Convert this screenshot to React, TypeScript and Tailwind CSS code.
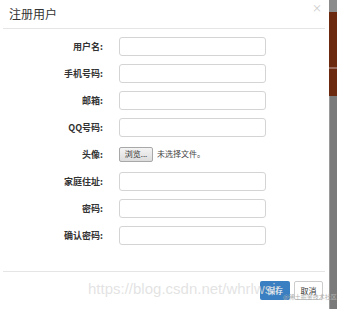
import React from "react";

const rows: { label: string; type: "input" | "file" }[] = [
  { label: "用户名:", type: "input" },
  { label: "手机号码:", type: "input" },
  { label: "邮箱:", type: "input" },
  { label: "QQ号码:", type: "input" },
  { label: "头像:", type: "file" },
  { label: "家庭住址:", type: "input" },
  { label: "密码:", type: "input" },
  { label: "确认密码:", type: "input" },
];

export default function App() {
  return (
    <div
      className="relative flex h-[309px] w-[337px] overflow-hidden bg-white"
      style={{ fontFamily: '"Noto Sans CJK SC", "Noto Sans", sans-serif' }}
    >
      <div className="flex w-[329px] flex-col pl-[3px] pr-[4px]">
        <div className="relative flex h-[29px] items-center border-b border-[#e5e5e5] pl-[6px]">
          <span className="text-[12px] leading-none text-[#333]">注册用户</span>
          <span className="absolute right-[3px] top-[3px] text-[10px] leading-none text-[#c8c8c8]">×</span>
        </div>
        <div className="flex flex-col gap-[9px] pt-[8px] pb-[27px]">
          {rows.map((r) => (
            <div key={r.label} className="flex h-[18px] items-center">
              <div className="w-[100px] text-right text-[9px] font-bold leading-none text-[#333]">
                {r.label}
              </div>
              <div className="ml-[16px]">
                {r.type === "input" ? (
                  <div className="h-[19px] w-[147px] rounded-[3px] border border-[#d4d4d4] bg-white" />
                ) : (
                  <div className="flex items-center">
                    <div className="flex h-[15px] w-[34px] items-center justify-center rounded-[2px] border border-[#a8a8a8] bg-gradient-to-b from-[#f4f4f4] to-[#dcdcdc] text-[8px] leading-none text-[#333]">
                      浏览...
                    </div>
                    <span className="ml-[4px] text-[8px] leading-none text-[#444]">未选择文件。</span>
                  </div>
                )}
              </div>
            </div>
          ))}
        </div>
        <div className="flex justify-end gap-[4px] border-t border-[#e5e5e5] pt-[9px] pr-[2px]">
          <div className="flex h-[19px] w-[30px] items-center justify-center rounded-[2px] bg-[#3a7fc1] text-[8px] leading-none text-white">
            保存
          </div>
          <div className="flex h-[19px] w-[29px] items-center justify-center rounded-[2px] border border-[#ccc] bg-white text-[8px] leading-none text-[#333]">
            取消
          </div>
        </div>
      </div>
      <div className="flex w-[8px] flex-col">
        <div className="h-[12px] bg-[#8c8c8c]" />
        <div className="h-[55px] bg-[#6b2a0f]" />
        <div className="h-[2px] bg-[#9a6a5c]" />
        <div className="h-[27px] bg-[#6b2a0f]" />
        <div className="flex-1 border-l border-[#9a9a9a] bg-[#7a7a7a]" />
      </div>
      <div
        className="pointer-events-none absolute left-[88px] top-[281px] text-[15px] leading-none text-[#dcdcdc]/80"
        style={{ fontFamily: '"Liberation Sans", sans-serif' }}
      >
        https://blog.csdn.net/whrlwsir
      </div>
      <div className="pointer-events-none absolute left-[283px] top-[294px] text-[6px] leading-none text-[#b0b0b0]">
        @稀土掘金技术社区
      </div>
    </div>
  );
}
